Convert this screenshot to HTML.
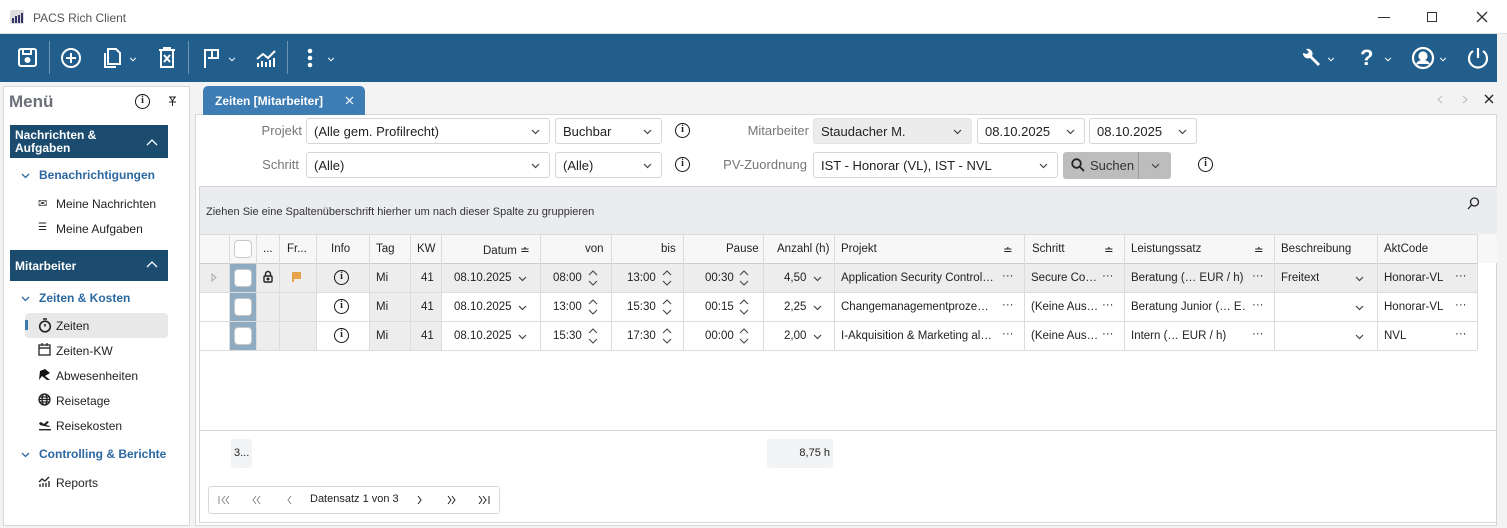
<!DOCTYPE html>
<html><head><meta charset="utf-8"><style>
*{box-sizing:border-box;margin:0;padding:0}
body{width:1507px;height:528px;overflow:hidden;background:#f3f3f3;font-family:"Liberation Sans",sans-serif;font-size:12px;color:#222;position:relative}
.a{position:absolute}
.tb{background:#215e8b}
.ic{position:absolute}
.sep{position:absolute;top:41px;width:1px;height:33px;background:#6f93b0}
.hdr{position:absolute;left:10px;width:158px;background:#1b4b6e;color:#fff;font-weight:bold;font-size:12px}
.sub{position:absolute;left:20px;color:#2c68a0;font-weight:bold;font-size:12px}
.it{position:absolute;left:38px;font-size:12px;color:#222}
.inp{position:absolute;background:#fff;border:1px solid #d6d6d6;border-radius:3px;height:26px;font-size:13px;padding:5px 7px}
.chev{position:absolute;right:9px;top:10px}
.lbl{position:absolute;color:#777;font-size:13px;text-align:right}
.c{position:absolute;font-size:11.5px;white-space:nowrap;overflow:hidden}
.hl{position:absolute;top:234px;height:116px;width:1px;background:#dcdcdc}
.rl{position:absolute;left:200px;width:1277px;height:1px;background:#dcdcdc}
.cb{position:absolute;width:18px;height:18px;background:#fff;border:1px solid #c8c8c8;border-radius:4px}
.info{position:absolute;width:15px;height:15px;border:1.6px solid #111;border-radius:50%;font:bold 10px "Liberation Serif",serif;text-align:center;line-height:12px}
.dd{position:absolute}
</style></head><body>
<svg width="0" height="0" style="position:absolute"><defs>
<symbol id="cd" viewBox="0 0 9 6"><path d="M1 1l3.5 3.5L8 1" stroke="#444" stroke-width="1.2" fill="none"/></symbol>
<symbol id="cw" viewBox="0 0 9 6"><path d="M1 1l3.5 3.5L8 1" stroke="#fff" stroke-width="1.2" fill="none"/></symbol>
<symbol id="sp" viewBox="0 0 10 18"><path d="M1 6l4-4 4 4M1 12l4 4 4-4" stroke="#444" stroke-width="1.1" fill="none"/></symbol>
</defs></svg>
<!-- title bar -->
<div class="a" style="left:0;top:0;width:1507px;height:34px;background:#fff;border-bottom:1px solid #e0e0e0"></div>
<svg class="a" style="left:10px;top:10px" width="14" height="14"><rect width="14" height="14" rx="2" fill="#ddd"/><rect x="2" y="8" width="2" height="5" fill="#336"/><rect x="5" y="6" width="2" height="7" fill="#336"/><rect x="8" y="5" width="2" height="8" fill="#336"/><rect x="11" y="3" width="2" height="10" fill="#336"/></svg>
<div class="a" style="left:33px;top:11px;font-size:12px;color:#555">PACS Rich Client</div>
<div class="a" style="left:1378px;top:17px;width:12px;height:1px;background:#333"></div>
<div class="a" style="left:1427px;top:12px;width:10px;height:10px;border:1px solid #333"></div>
<svg class="a" style="left:1476px;top:11px" width="12" height="12"><path d="M1 1l10 10M11 1L1 11" stroke="#333" stroke-width="1.3"/></svg>
<!-- toolbar -->
<div class="a tb" style="left:0;top:34px;width:1497px;height:48px"></div>
<svg class="a" style="left:18px;top:48px" width="20" height="20" fill="none" stroke="#fff" stroke-width="2"><rect x="1" y="1" width="17" height="17" rx="2"/><path d="M5 1v5h8V1"/><circle cx="9.5" cy="12" r="2" fill="#fff"/></svg>
<div class="sep" style="left:49px"></div>
<svg class="a" style="left:60px;top:47px" width="22" height="22" fill="none" stroke="#fff" stroke-width="2"><circle cx="11" cy="11" r="9"/><path d="M11 6v10M6 11h10"/></svg>
<svg class="a" style="left:102px;top:46px" width="20" height="24" fill="none" stroke="#fff" stroke-width="2"><path d="M6 3h8l4 4v11H6z"/><path d="M3 7v14h11"/></svg>
<svg class="ic" style="left:129px;top:57px" width="8" height="5"><use href="#cw"/></svg>
<svg class="a" style="left:158px;top:47px" width="18" height="22" fill="none" stroke="#fff" stroke-width="2"><path d="M1 3h16M6 3V1h6v2M3 3v17h12V3"/><path d="M6 8l6 7M12 8l-6 7"/></svg>
<div class="sep" style="left:188px"></div>
<svg class="a" style="left:203px;top:48px" width="18" height="20" fill="none" stroke="#fff" stroke-width="2"><path d="M2 20V2h13v8H5"/><path d="M9 2v8"/></svg>
<svg class="ic" style="left:228px;top:57px" width="8" height="5"><use href="#cw"/></svg>
<svg class="a" style="left:256px;top:48px" width="20" height="20" fill="none" stroke="#fff" stroke-width="2"><path d="M1 11l6-5 5 4 7-7"/><path d="M2 19v-4M6 19v-6M10 19v-5M14 19v-7M18 19v-9"/></svg>
<div class="sep" style="left:287px"></div>
<svg class="a" style="left:307px;top:48px" width="6" height="20" fill="#fff"><circle cx="3" cy="3" r="2.3"/><circle cx="3" cy="10" r="2.3"/><circle cx="3" cy="17" r="2.3"/></svg>
<svg class="ic" style="left:327px;top:57px" width="8" height="5"><use href="#cw"/></svg>
<svg class="a" style="left:1301px;top:48px" width="20" height="20" fill="#fff"><path d="M2 5a5 5 0 0 0 7 5l8 8 2-2-8-8a5 5 0 0 0-6-7l3 3-2 2z"/></svg>
<svg class="ic" style="left:1327px;top:57px" width="8" height="5"><use href="#cw"/></svg>
<div class="ic" style="left:1360px;top:45px;font-size:22px;font-weight:bold;color:#fff">?</div>
<svg class="ic" style="left:1384px;top:57px" width="8" height="5"><use href="#cw"/></svg>
<svg class="a" style="left:1411px;top:46px" width="24" height="24" fill="none" stroke="#fff" stroke-width="2.2"><circle cx="12" cy="12" r="10"/><circle cx="12" cy="10" r="3.5" fill="#fff"/><path d="M6 18c3-4 9-4 12 0" fill="#fff"/></svg>
<svg class="ic" style="left:1439px;top:57px" width="8" height="5"><use href="#cw"/></svg>
<svg class="a" style="left:1466px;top:46px" width="24" height="24" fill="none" stroke="#fff" stroke-width="2.2"><path d="M7 5a9 9 0 1 0 10 0"/><path d="M12 2v10"/></svg>
<!-- sidebar -->
<div class="a" style="left:3px;top:86px;width:187px;height:440px;background:#fff;border:1px solid #d8d8d8"></div>
<div class="a" style="left:9px;top:92px;font-size:17px;font-weight:bold;color:#6a6f78">Menü</div>
<div class="info" style="left:135px;top:94px">i</div>
<svg class="a" style="left:168px;top:96px" width="9" height="11" fill="none" stroke="#222"><path d="M1 1h7M2 1l2.5 4L7 1M1 6h7M4.5 6v4"/></svg>
<div class="hdr" style="top:125px;height:33px;padding:4px 5px;line-height:13px">Nachrichten &amp;<br>Aufgaben</div>
<svg class="a" style="left:146px;top:139px" width="12" height="7"><path d="M1 6l5-5 5 5" stroke="#fff" fill="none" stroke-width="1.3"/></svg>
<svg class="a" style="left:21px;top:173px" width="9" height="6"><path d="M1 1l3.5 3.5L8 1" stroke="#2c68a0" fill="none" stroke-width="1.3"/></svg>
<div class="sub" style="left:39px;top:168px">Benachrichtigungen</div>
<div class="a" style="left:38px;top:197px;font-size:11px">✉</div><div class="it" style="left:56px;top:197px">Meine Nachrichten</div>
<div class="a" style="left:38px;top:222px;font-size:10px">☰</div><div class="it" style="left:56px;top:222px">Meine Aufgaben</div>
<div class="hdr" style="top:250px;height:31px;padding:9px 5px">Mitarbeiter</div>
<svg class="a" style="left:146px;top:261px" width="12" height="7"><path d="M1 6l5-5 5 5" stroke="#fff" fill="none" stroke-width="1.3"/></svg>
<svg class="a" style="left:21px;top:296px" width="9" height="6"><path d="M1 1l3.5 3.5L8 1" stroke="#2c68a0" fill="none" stroke-width="1.3"/></svg>
<div class="sub" style="left:39px;top:291px">Zeiten &amp; Kosten</div>
<div class="a" style="left:25px;top:313px;width:143px;height:25px;background:#e8e8e8;border-radius:4px"></div>
<div class="a" style="left:25px;top:320px;width:3px;height:10px;background:#3a78b0"></div>
<svg class="a" style="left:38px;top:318px" width="14" height="15" fill="none" stroke="#222" stroke-width="1.6"><circle cx="7" cy="8.5" r="5.3"/><path d="M5 1h4M7 8.5V6"/></svg><div class="it" style="left:56px;top:319px">Zeiten</div>
<svg class="a" style="left:38px;top:343px" width="13" height="13" fill="none" stroke="#333" stroke-width="1.4"><rect x="1" y="2" width="11" height="10"/><path d="M1 5h11M4 0v3M9 0v3"/></svg><div class="it" style="left:56px;top:344px">Zeiten-KW</div>
<svg class="a" style="left:38px;top:368px" width="13" height="13" fill="#111"><path d="M1 12L2 3l5-2 5 4-5 3 5 4-3 0-5-4z"/></svg><div class="it" style="left:56px;top:369px">Abwesenheiten</div>
<svg class="a" style="left:38px;top:393px" width="13" height="13" fill="none" stroke="#222" stroke-width="1.3"><circle cx="6.5" cy="6.5" r="5.5"/><ellipse cx="6.5" cy="6.5" rx="2.5" ry="5.5"/><path d="M1 6.5h11M2 4h9M2 9h9"/></svg><div class="it" style="left:56px;top:394px">Reisetage</div>
<svg class="a" style="left:38px;top:418px" width="13" height="13" fill="#222"><path d="M1 5l2-1 3 2 3-3 2 1-3 3 4 1-1 1-5-1-4-1z"/><rect x="1" y="11" width="12" height="1.4"/></svg><div class="it" style="left:56px;top:419px">Reisekosten</div>
<svg class="a" style="left:21px;top:452px" width="9" height="6"><path d="M1 1l3.5 3.5L8 1" stroke="#2c68a0" fill="none" stroke-width="1.3"/></svg>
<div class="sub" style="left:39px;top:447px">Controlling &amp; Berichte</div>
<svg class="a" style="left:38px;top:476px" width="12" height="11" fill="none" stroke="#222" stroke-width="1.3"><path d="M1 6l3-3 3 2 4-4"/><path d="M2 11V8M5 11V7M8 11V7M11 11V5"/></svg><div class="it" style="left:56px;top:476px">Reports</div>
<!-- main panel -->
<div class="a" style="left:195px;top:114px;width:1302px;height:412px;background:#fff;border:1px solid #d8d8d8"></div>
<div class="a" style="left:203px;top:86px;width:162px;height:29px;background:#3d7db3;border-radius:5px 5px 0 0;color:#fff;font-weight:bold;font-size:12px;padding:8px 12px">Zeiten [Mitarbeiter]</div>
<svg class="a" style="left:345px;top:96px" width="9" height="9"><path d="M1 1l7 7M8 1L1 8" stroke="#fff" stroke-width="1.2"/></svg>
<svg class="a" style="left:1437px;top:95px" width="6" height="9"><path d="M5 1L1 4.5 5 8" stroke="#bbb" fill="none"/></svg>
<svg class="a" style="left:1462px;top:95px" width="6" height="9"><path d="M1 1l4 3.5L1 8" stroke="#bbb" fill="none"/></svg>
<svg class="a" style="left:1484px;top:94px" width="10" height="10"><path d="M1 1l8 8M9 1L1 9" stroke="#222" stroke-width="1.3"/></svg>
<!-- filters -->
<div class="lbl" style="left:230px;top:123px;width:72px">Projekt</div>
<div class="inp" style="left:306px;top:118px;width:244px">(Alle gem. Profilrecht)<svg class="chev" width="9" height="6"><use href="#cd"/></svg></div>
<div class="inp" style="left:555px;top:118px;width:107px">Buchbar<svg class="chev" width="9" height="6"><use href="#cd"/></svg></div>
<div class="info" style="left:675px;top:123px">i</div>
<div class="lbl" style="left:720px;top:123px;width:89px">Mitarbeiter</div>
<div class="inp" style="left:813px;top:118px;width:159px;background:#ececec;border-color:#e4e4e4">Staudacher M.<svg class="chev" width="9" height="6"><use href="#cd"/></svg></div>
<div class="inp" style="left:977px;top:118px;width:108px">08.10.2025<svg class="chev" width="9" height="6"><use href="#cd"/></svg></div>
<div class="inp" style="left:1089px;top:118px;width:108px">08.10.2025<svg class="chev" width="9" height="6"><use href="#cd"/></svg></div>
<div class="lbl" style="left:230px;top:157px;width:69px">Schritt</div>
<div class="inp" style="left:306px;top:152px;width:244px">(Alle)<svg class="chev" width="9" height="6"><use href="#cd"/></svg></div>
<div class="inp" style="left:555px;top:152px;width:107px">(Alle)<svg class="chev" width="9" height="6"><use href="#cd"/></svg></div>
<div class="info" style="left:675px;top:157px">i</div>
<div class="lbl" style="left:700px;top:157px;width:107px">PV-Zuordnung</div>
<div class="inp" style="left:813px;top:152px;width:245px">IST - Honorar (VL), IST - NVL<svg class="chev" width="9" height="6"><use href="#cd"/></svg></div>
<div class="a" style="left:1063px;top:152px;width:108px;height:27px;background:#bdbdbd;border-radius:3px"></div>
<div class="a" style="left:1138px;top:152px;width:1px;height:27px;background:#999"></div>
<svg class="a" style="left:1071px;top:158px" width="14" height="14" fill="none" stroke="#222" stroke-width="1.8"><circle cx="5.5" cy="5.5" r="4.3"/><path d="M8.5 8.5l4.5 4.5"/></svg>
<div class="a" style="left:1090px;top:158px;font-size:13px;color:#333">Suchen</div>
<svg class="a" style="left:1151px;top:163px" width="9" height="6"><use href="#cd"/></svg>
<div class="info" style="left:1198px;top:157px">i</div>
<!-- grid -->
<div class="a" style="left:199px;top:186px;width:1298px;height:337px;border:1px solid #d4d4d4;background:#fff"></div>
<div class="a" style="left:200px;top:187px;width:1297px;height:47px;background:#eaecef"></div>
<div class="a" style="left:206px;top:206px;font-size:11px;color:#333">Ziehen Sie eine Spaltenüberschrift hierher um nach dieser Spalte zu gruppieren</div>
<svg class="a" style="left:1467px;top:197px" width="13" height="13" fill="none" stroke="#222" stroke-width="1.3"><circle cx="7.5" cy="5" r="4"/><path d="M4.5 8L1 12"/></svg>
<div class="a" style="left:200px;top:234px;width:1297px;height:29px;background:#f7f7f7"></div>
<div class="a" style="left:200px;top:263px;width:1277px;height:29px;background:#ededed"></div>
<div class="a" style="left:229px;top:263px;width:27px;height:87px;background:#8eabc2"></div>
<div class="a" style="left:256px;top:263px;width:60px;height:87px;background:#ededed"></div>
<div class="a" style="left:369px;top:263px;width:72px;height:87px;background:#ededed"></div>
<div class="rl" style="top:234px"></div><div class="rl" style="top:263px;background:#ccc"></div><div class="rl" style="top:292px"></div><div class="rl" style="top:321px"></div><div class="rl" style="top:350px"></div>
<div class="hl" style="left:229px"></div><div class="hl" style="left:256px"></div><div class="hl" style="left:279px"></div><div class="hl" style="left:316px"></div><div class="hl" style="left:369px"></div><div class="hl" style="left:410px"></div><div class="hl" style="left:441px"></div><div class="hl" style="left:540px"></div><div class="hl" style="left:611px"></div><div class="hl" style="left:683px"></div><div class="hl" style="left:763px"></div><div class="hl" style="left:834px"></div><div class="hl" style="left:1024px"></div><div class="hl" style="left:1124px"></div><div class="hl" style="left:1274px"></div><div class="hl" style="left:1377px"></div><div class="hl" style="left:1477px"></div>
<!-- header -->
<div class="cb" style="left:234px;top:240px"></div>
<div class="c" style="left:263px;top:243px">...</div>
<div class="c" style="left:287px;top:243px">Fr...</div>
<div class="c" style="left:331px;top:243px">Info</div>
<div class="c" style="left:376px;top:243px">Tag</div>
<div class="c" style="left:417px;top:243px">KW</div>
<div class="c" style="left:483px;top:243px">Datum ≐</div>
<div class="c" style="left:585px;top:243px">von</div>
<div class="c" style="left:661px;top:243px">bis</div>
<div class="c" style="left:726px;top:243px">Pause</div>
<div class="c" style="left:777px;top:243px">Anzahl (h)</div>
<div class="c" style="left:841px;top:243px">Projekt</div><div class="c" style="left:1003px;top:243px">≐</div>
<div class="c" style="left:1032px;top:243px">Schritt</div><div class="c" style="left:1104px;top:243px">≐</div>
<div class="c" style="left:1131px;top:243px">Leistungssatz</div><div class="c" style="left:1254px;top:243px">≐</div>
<div class="c" style="left:1281px;top:243px">Beschreibung</div>
<div class="c" style="left:1384px;top:243px">AktCode</div>
<!-- rows -->
<svg class="a" style="left:211px;top:273px" width="6" height="9"><path d="M1 1l4 3.5L1 8z" stroke="#aaa" fill="none"/></svg>
<div class="cb" style="left:234px;top:269px"></div><div class="cb" style="left:234px;top:298px"></div><div class="cb" style="left:234px;top:327px"></div>
<svg class="a" style="left:263px;top:270px" width="10" height="13" fill="none" stroke="#222" stroke-width="1.4"><path d="M2.5 6V4a2.5 2.5 0 0 1 5 0v2"/><rect x="1" y="6" width="8" height="6" rx="1"/><circle cx="5" cy="9" r=".8" fill="#222"/></svg>
<svg class="a" style="left:291px;top:271px" width="11" height="11"><path d="M1 1h9v7H3v3H1z" fill="#e8a24a"/></svg>
<div class="info" style="left:334px;top:270px">i</div><div class="info" style="left:334px;top:299px">i</div><div class="info" style="left:334px;top:328px">i</div>
<div class="c" style="left:376px;top:272px">Mi</div><div class="c" style="left:376px;top:301px">Mi</div><div class="c" style="left:376px;top:330px">Mi</div>
<div class="c" style="left:421px;top:272px">41</div><div class="c" style="left:421px;top:301px">41</div><div class="c" style="left:421px;top:330px">41</div>
<div class="c" style="left:454px;top:272px">08.10.2025</div><div class="c" style="left:454px;top:301px">08.10.2025</div><div class="c" style="left:454px;top:330px">08.10.2025</div>
<svg class="dd" style="left:518px;top:276px" width="9" height="6"><use href="#cd"/></svg><svg class="dd" style="left:518px;top:305px" width="9" height="6"><use href="#cd"/></svg><svg class="dd" style="left:518px;top:334px" width="9" height="6"><use href="#cd"/></svg>
<div class="c" style="left:553px;top:272px">08:00</div><div class="c" style="left:553px;top:301px">13:00</div><div class="c" style="left:553px;top:330px">15:30</div>
<div class="c" style="left:627px;top:272px">13:00</div><div class="c" style="left:627px;top:301px">15:30</div><div class="c" style="left:627px;top:330px">17:30</div>
<div class="c" style="left:705px;top:272px">00:30</div><div class="c" style="left:705px;top:301px">00:15</div><div class="c" style="left:705px;top:330px">00:00</div>
<svg class="dd" style="left:588px;top:269px" width="10" height="18"><use href="#sp"/></svg><svg class="dd" style="left:588px;top:298px" width="10" height="18"><use href="#sp"/></svg><svg class="dd" style="left:588px;top:327px" width="10" height="18"><use href="#sp"/></svg>
<svg class="dd" style="left:662px;top:269px" width="10" height="18"><use href="#sp"/></svg><svg class="dd" style="left:662px;top:298px" width="10" height="18"><use href="#sp"/></svg><svg class="dd" style="left:662px;top:327px" width="10" height="18"><use href="#sp"/></svg>
<svg class="dd" style="left:739px;top:269px" width="10" height="18"><use href="#sp"/></svg><svg class="dd" style="left:739px;top:298px" width="10" height="18"><use href="#sp"/></svg><svg class="dd" style="left:739px;top:327px" width="10" height="18"><use href="#sp"/></svg>
<div class="c" style="left:784px;top:272px">4,50</div><div class="c" style="left:784px;top:301px">2,25</div><div class="c" style="left:784px;top:330px">2,00</div>
<svg class="dd" style="left:813px;top:276px" width="9" height="6"><use href="#cd"/></svg><svg class="dd" style="left:813px;top:305px" width="9" height="6"><use href="#cd"/></svg><svg class="dd" style="left:813px;top:334px" width="9" height="6"><use href="#cd"/></svg>
<div class="c" style="left:841px;top:272px;width:153px;text-overflow:ellipsis">Application Security Control - ...</div><div class="c" style="left:1002px;top:270px">···</div>
<div class="c" style="left:841px;top:301px;width:153px;text-overflow:ellipsis">Changemanagementprozess -...</div><div class="c" style="left:1002px;top:299px">···</div>
<div class="c" style="left:841px;top:330px;width:153px;text-overflow:ellipsis">I-Akquisition &amp; Marketing allgemein</div><div class="c" style="left:1002px;top:328px">···</div>
<div class="c" style="left:1031px;top:272px">Secure Co…</div><div class="c" style="left:1102px;top:270px">···</div>
<div class="c" style="left:1031px;top:301px">(Keine Aus…</div><div class="c" style="left:1102px;top:299px">···</div>
<div class="c" style="left:1031px;top:330px">(Keine Aus…</div><div class="c" style="left:1102px;top:328px">···</div>
<div class="c" style="left:1131px;top:272px;width:115px">Beratung (… EUR / h)</div><div class="c" style="left:1252px;top:270px">···</div>
<div class="c" style="left:1131px;top:301px;width:115px">Beratung Junior (… E…</div><div class="c" style="left:1252px;top:299px">···</div>
<div class="c" style="left:1131px;top:330px;width:115px">Intern (… EUR / h)</div><div class="c" style="left:1252px;top:328px">···</div>
<div class="c" style="left:1281px;top:272px">Freitext</div>
<svg class="dd" style="left:1355px;top:276px" width="9" height="6"><use href="#cd"/></svg><svg class="dd" style="left:1355px;top:305px" width="9" height="6"><use href="#cd"/></svg><svg class="dd" style="left:1355px;top:334px" width="9" height="6"><use href="#cd"/></svg>
<div class="c" style="left:1384px;top:272px">Honorar-VL</div><div class="c" style="left:1455px;top:270px">···</div>
<div class="c" style="left:1384px;top:301px">Honorar-VL</div><div class="c" style="left:1455px;top:299px">···</div>
<div class="c" style="left:1384px;top:330px">NVL</div><div class="c" style="left:1455px;top:328px">···</div>
<!-- footer -->
<div class="a" style="left:200px;top:430px;width:1297px;height:1px;background:#d4d4d4"></div>
<div class="a" style="left:231px;top:439px;width:21px;height:29px;background:#f2f3f5;border-radius:3px;font-size:11px;padding:8px 3px">3...</div>
<div class="a" style="left:767px;top:439px;width:66px;height:29px;background:#f2f3f5;border-radius:3px;font-size:11px;padding:8px 3px;text-align:right">8,75 h</div>
<div class="a" style="left:208px;top:486px;width:292px;height:28px;border:1px solid #d8d8d8;border-radius:3px;background:#fff"></div>
<svg class="a" style="left:218px;top:495px" width="12" height="10" fill="none" stroke="#888"><path d="M1 1v8M7 1L4 5l3 4M11 1L8 5l3 4"/></svg>
<svg class="a" style="left:252px;top:495px" width="9" height="10" fill="none" stroke="#888"><path d="M4 1L1 5l3 4M8 1L5 5l3 4"/></svg>
<svg class="a" style="left:287px;top:495px" width="5" height="10" fill="none" stroke="#888"><path d="M4 1L1 5l3 4"/></svg>
<div class="a" style="left:310px;top:493px;font-size:11px">Datensatz 1 von 3</div>
<svg class="a" style="left:417px;top:495px" width="5" height="10" fill="none" stroke="#222"><path d="M1 1l3 4-3 4"/></svg>
<svg class="a" style="left:447px;top:495px" width="9" height="10" fill="none" stroke="#222"><path d="M1 1l3 4-3 4M5 1l3 4-3 4"/></svg>
<svg class="a" style="left:478px;top:495px" width="12" height="10" fill="none" stroke="#222"><path d="M1 1l3 4-3 4M5 1l3 4-3 4M11 1v8"/></svg>
</body></html>
